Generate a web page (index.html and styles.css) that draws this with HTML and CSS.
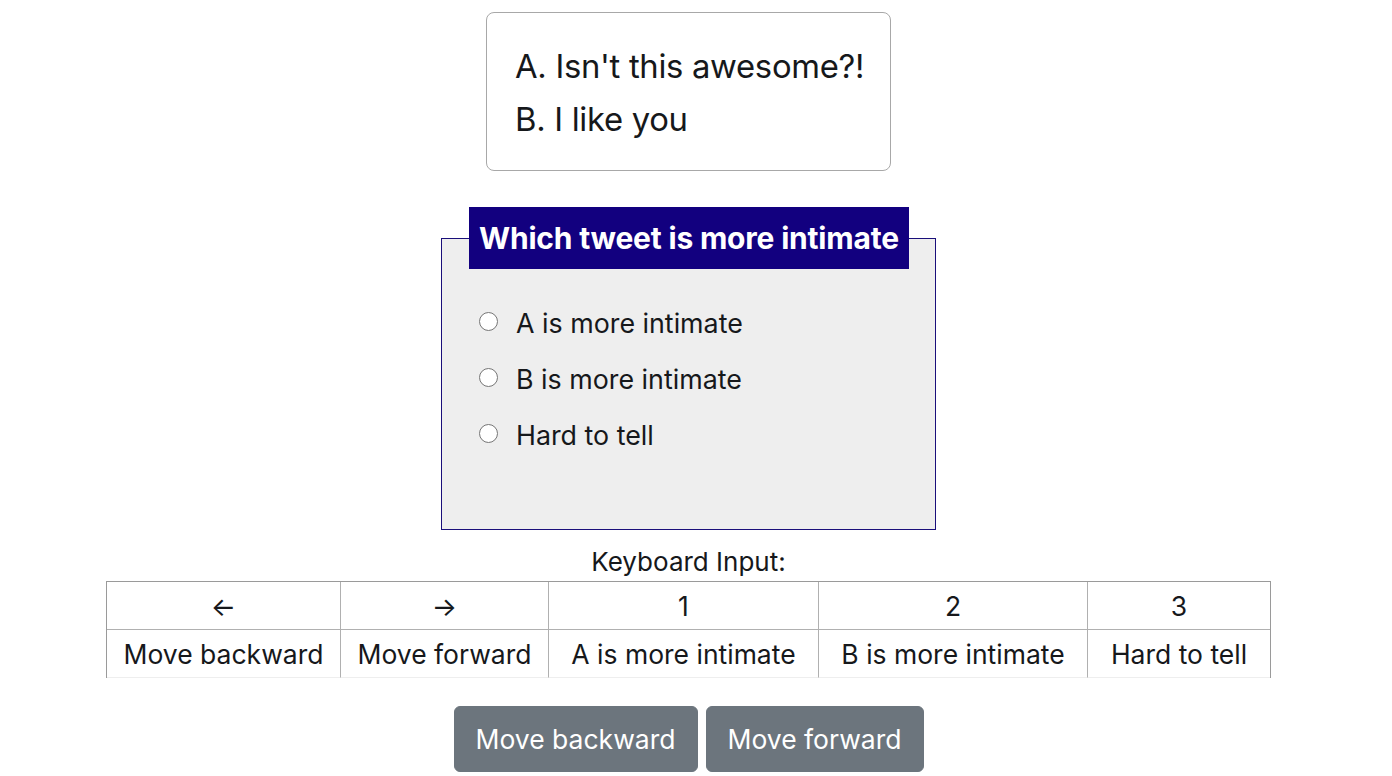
FILE: index.html
```html
<!DOCTYPE html>
<html>
<head>
<meta charset="utf-8">
<link rel="stylesheet" href="styles.css">
</head>
<body>
<div class="page">
  <div class="tweet">
    <p class="tweet-line">A. Isn't this awesome?!</p>
    <p class="tweet-line">B. I like you</p>
  </div>
  <fieldset class="question">
    <legend class="q-title">Which tweet is more intimate</legend>
    <div class="options">
      <label class="option"><input type="radio" name="q" class="radio"><span>A is more intimate</span></label>
      <label class="option"><input type="radio" name="q" class="radio"><span>B is more intimate</span></label>
      <label class="option"><input type="radio" name="q" class="radio"><span>Hard to tell</span></label>
    </div>
  </fieldset>
  <div class="kb-title">Keyboard Input:</div>
  <table class="kb">
    <tr>
      <td class="c1">&larr;</td>
      <td class="c2">&rarr;</td>
      <td class="c3">1</td>
      <td class="c4">2</td>
      <td class="c5">3</td>
    </tr>
    <tr>
      <td>Move backward</td>
      <td>Move forward</td>
      <td>A is more intimate</td>
      <td>B is more intimate</td>
      <td>Hard to tell</td>
    </tr>
  </table>
  <div class="buttons">
    <button class="btn btn-back">Move backward</button>
    <button class="btn btn-fwd">Move forward</button>
  </div>
</div>
</body>
</html>
```
FILE: styles.css
```css
html, body {
  margin: 0;
  padding: 0;
  background: #ffffff;
}
body {
  font-family: Inter, "Noto Sans", "Liberation Sans", sans-serif;
  color: #16181b;
}
.page {
  width: 1377px;
  display: flex;
  flex-direction: column;
  align-items: center;
  padding-top: 12px;
}
.tweet {
  width: 405px;
  height: 159px;
  box-sizing: border-box;
  border: 1px solid #a8a8a8;
  border-radius: 8px;
  padding: 27px 0 0 28px;
}
.tweet-line {
  margin: 0;
  font-size: 32.8px;
  line-height: 53px;
  letter-spacing: -0.3px;
  white-space: nowrap;
}
.question {
  margin: 36px 0 0 0;
  width: 495px;
  height: 323px;
  box-sizing: border-box;
  border: 1px solid #1a0f7a;
  background: #eeeeee;
  padding: 0;
  min-width: 0;
}
.q-title {
  background: #12007f;
  color: #ffffff;
  font-weight: 700;
  font-size: 30px;
  line-height: 62px;
  padding: 0 10px;
  margin-left: 27px;
  letter-spacing: -0.2px;
  white-space: nowrap;
}
.options {
  padding: 26px 0 0 37px;
}
.option {
  display: flex;
  align-items: center;
  height: 56px;
  font-size: 26.8px;
  white-space: nowrap;
}
.radio {
  width: 19px;
  height: 19px;
  margin: 0 18px 0 0;
  appearance: none;
  -webkit-appearance: none;
  border: 1.5px solid #767676;
  border-radius: 50%;
  background: #ffffff;
  box-sizing: border-box;
  position: relative;
  top: -2px;
}
.kb-title {
  margin-top: 17px;
  font-size: 26px;
  line-height: 30px;
}
.kb {
  margin-top: 4px;
  border-collapse: separate;
  border-spacing: 0;
  border: 1px solid #9a9a9a;
  border-bottom: none;
  font-size: 26.5px;
}
.kb td {
  border-right: 1px solid #b0b0b0;
  border-bottom: 1px solid #b0b0b0;
  text-align: center;
  height: 47px;
  padding: 0;
  white-space: nowrap;
}
.kb tr:last-child td {
  border-bottom: 1px solid #eeeeee;
}
.kb td:last-child {
  border-right: none;
}
.c1 { width: 233px; }
.c2 { width: 207px; }
.c3 { width: 269px; }
.c4 { width: 268px; }
.c5 { width: 182px; }
.buttons {
  margin-top: 28px;
  display: flex;
  gap: 8px;
}
.btn {
  font-family: inherit;
  background: #6c757d;
  color: #ffffff;
  border: 1px solid #6c757d;
  border-radius: 6px;
  font-size: 26.5px;
  height: 66px;
  padding: 0;
  white-space: nowrap;
}
.btn-back { width: 244px; }
.btn-fwd { width: 218px; }
```
